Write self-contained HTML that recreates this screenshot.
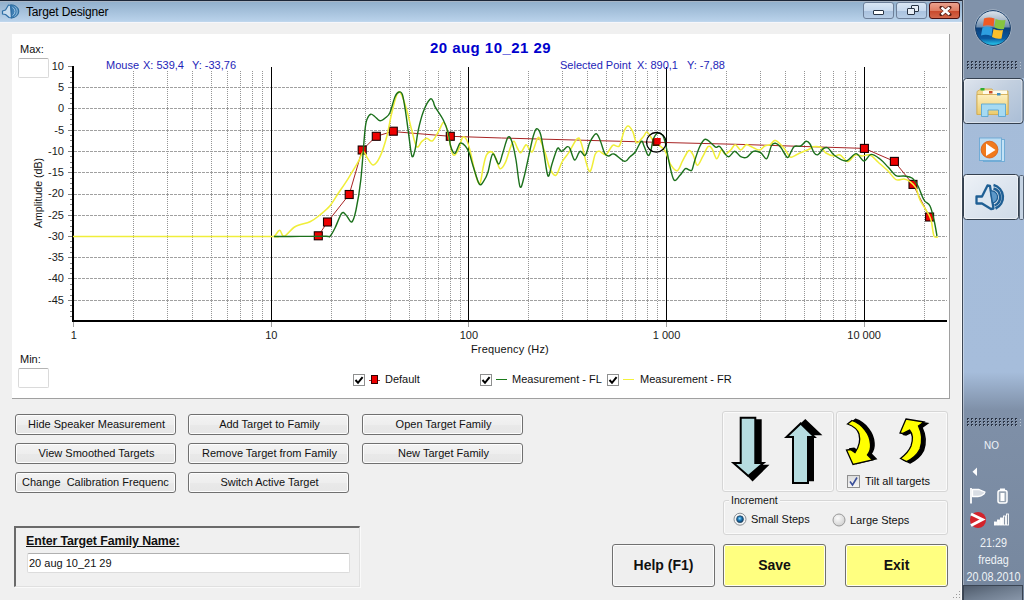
<!DOCTYPE html>
<html><head><meta charset="utf-8">
<style>
*{box-sizing:border-box;margin:0;padding:0}
html,body{width:1024px;height:600px;overflow:hidden;background:#f0f0f0;font-family:"Liberation Sans",sans-serif;position:relative}
.abs{position:absolute}
#titlebar{position:absolute;left:0;top:0;width:962px;height:23px;background:linear-gradient(#a9b6c6 0,#a9b6c6 1px,#92b0cd 1px,#b9d2ea 20px,#c4daee 21px,#f6f6fa 21px);border-top:1px solid #1c2638}
#title{position:absolute;left:26px;top:4px;font-size:12px;color:#000;letter-spacing:-0.15px}
#winright{position:absolute;left:961px;top:22px;width:1px;height:578px;background:#fbfbfb}
#windark{position:absolute;left:962px;top:0;width:1px;height:600px;background:#3e4856}
.tbtn{position:absolute;top:1px;height:17px;border:1px solid #6d7f99;border-radius:3px;background:linear-gradient(#d9e6f4 0,#c7d9ee 50%,#a9c1de 51%,#b7cde6 100%)}
.tbtn.close{border-color:#4a1010;background:linear-gradient(#eba18d 0,#de7d63 50%,#c8472b 51%,#d2664a 100%)}
#panel{position:absolute;left:12px;top:34px;width:938px;height:365px;background:#fff;border-right:1px solid #a0a0a0;border-bottom:1px solid #a0a0a0}
svg.full{position:absolute;left:0;top:0}
.yl{position:absolute;left:24px;width:40px;text-align:right;font-size:11px;color:#1a1a1a;line-height:14px}
.xl{position:absolute;top:328px;width:80px;text-align:center;font-size:11px;color:#1a1a1a;line-height:14px}
.t11{position:absolute;font-size:11px;line-height:14px;color:#111;white-space:nowrap}
.blue{color:#1e1eb8}
.smallbox{position:absolute;background:#fff;border:1px solid #dadada;border-top-color:#b4b4b4;border-radius:2px}
.chk{position:absolute;width:12px;height:12px;border:1px solid #8e8f8f;background:#fff}
.btn{position:absolute;height:21px;width:161px;border:1px solid #707070;border-radius:3px;background:linear-gradient(#f3f3f3,#eeeeee 50%,#e9e9e9 51%,#e6e6e6);box-shadow:inset 0 0 0 1px #fdfdfd;font-size:11px;line-height:18px;padding-left:2px;text-align:center;color:#111;white-space:nowrap;overflow:hidden}
.bbtn{position:absolute;top:544px;height:43px;width:103px;border:1px solid #707070;border-radius:3px;background:#efefef;box-shadow:inset 0 0 0 1px #fcfcfc;font-size:14px;font-weight:bold;line-height:41px;text-align:center;color:#111}
.bbtn.yel{background:#ffff80;box-shadow:inset 0 0 0 1px #fffff0}
.grp{position:absolute;border:1px solid #d6d6d6;border-radius:3px;box-shadow:inset 0 0 0 1px #fafafa}
#taskbar{position:absolute;left:963px;top:0;width:61px;height:600px;background:linear-gradient(#8092aa 0,#8092aa 78px,#a5bcd9 78px,#a6bddb 372px,#7f90a8 410px,#76879e 600px);border-left:1px solid rgba(255,255,255,0.35)}
.tray{position:absolute;color:#eef2f6;font-size:12px;text-align:center;width:61px;left:963px;line-height:14px;transform:scaleX(0.9)}
</style></head><body>

<div id="titlebar">
  <svg class="abs" style="left:0px;top:0px" width="22" height="22" viewBox="0 0 22 22">
    <path d="M10.5,3.8 A7.8,6.6 0 0 1 11.5,17 Z" fill="#3f7fb4" stroke="#2a6a9c" stroke-width="1"/>
    <path d="M12.5,6.5 A4.5,4.5 0 0 1 12.5,14.5" fill="none" stroke="#a8cce6" stroke-width="0.9"/>
    <path d="M14.5,5.5 A6,6 0 0 1 14.5,15.5" fill="none" stroke="#a8cce6" stroke-width="0.8"/>
    <path d="M2.5,10 L5.5,9 L8.5,4 L10.5,4.5 L11.5,17 L9,16.5 L5.5,13.5 L2.5,13 Z" fill="#c8dcee" stroke="#2f6fa6" stroke-width="1.2" stroke-linejoin="round"/>
  </svg>
  <div id="title">Target Designer</div>
  <div class="tbtn" style="left:863px;width:31px">
    <div class="abs" style="left:9px;top:7px;width:11px;height:5px;background:#fff;border:1px solid #2a3546;border-radius:1px"></div>
  </div>
  <div class="tbtn" style="left:896px;width:31px">
    <div class="abs" style="left:14px;top:2px;width:8px;height:7px;border:1px solid #2a3546;background:#e8eef6;border-radius:1px"></div>
    <div class="abs" style="left:10px;top:5px;width:8px;height:7px;border:1px solid #2a3546;background:#e8eef6;border-radius:1px"></div>
  </div>
  <div class="tbtn close" style="left:929px;width:31px">
    <svg class="abs" style="left:9px;top:3px" width="13" height="10" viewBox="0 0 13 10"><path d="M2.5 1.5 L10.5 8.5 M10.5 1.5 L2.5 8.5" stroke="#5a1e14" stroke-width="4" stroke-linecap="round"/><path d="M2.5 1.5 L10.5 8.5 M10.5 1.5 L2.5 8.5" stroke="#fff" stroke-width="2.4"/></svg>
  </div>
</div>
<div id="winright"></div><div id="windark"></div>
<svg class="abs" style="left:950px;top:588px" width="12" height="12"><g fill="#9a9a9a"><rect x="9" y="3" width="1" height="1"/><rect x="6" y="6" width="1" height="1"/><rect x="9" y="6" width="1" height="1"/><rect x="3" y="9" width="1" height="1"/><rect x="6" y="9" width="1" height="1"/><rect x="9" y="9" width="1" height="1"/></g></svg>

<div id="panel"></div>
<svg class="full" width="1024" height="600" shape-rendering="crispEdges"><line x1="74" y1="87.5" x2="947" y2="87.5" stroke="#a0a0a0" stroke-dasharray="3,1"/><line x1="74" y1="108.5" x2="947" y2="108.5" stroke="#a0a0a0" stroke-dasharray="3,1"/><line x1="74" y1="130.5" x2="947" y2="130.5" stroke="#a0a0a0" stroke-dasharray="3,1"/><line x1="74" y1="151.5" x2="947" y2="151.5" stroke="#a0a0a0" stroke-dasharray="3,1"/><line x1="74" y1="172.5" x2="947" y2="172.5" stroke="#a0a0a0" stroke-dasharray="3,1"/><line x1="74" y1="194.5" x2="947" y2="194.5" stroke="#a0a0a0" stroke-dasharray="3,1"/><line x1="74" y1="215.5" x2="947" y2="215.5" stroke="#a0a0a0" stroke-dasharray="3,1"/><line x1="74" y1="236.5" x2="947" y2="236.5" stroke="#a0a0a0" stroke-dasharray="3,1"/><line x1="74" y1="257.5" x2="947" y2="257.5" stroke="#a0a0a0" stroke-dasharray="3,1"/><line x1="74" y1="278.5" x2="947" y2="278.5" stroke="#a0a0a0" stroke-dasharray="3,1"/><line x1="74" y1="300.5" x2="947" y2="300.5" stroke="#a0a0a0" stroke-dasharray="3,1"/><line x1="133.5" y1="71" x2="133.5" y2="320" stroke="#959595" stroke-dasharray="1,1"/><line x1="167.5" y1="71" x2="167.5" y2="320" stroke="#959595" stroke-dasharray="1,1"/><line x1="192.5" y1="71" x2="192.5" y2="320" stroke="#959595" stroke-dasharray="1,1"/><line x1="211.5" y1="71" x2="211.5" y2="320" stroke="#959595" stroke-dasharray="1,1"/><line x1="227.5" y1="71" x2="227.5" y2="320" stroke="#959595" stroke-dasharray="1,1"/><line x1="240.5" y1="71" x2="240.5" y2="320" stroke="#959595" stroke-dasharray="1,1"/><line x1="252.5" y1="71" x2="252.5" y2="320" stroke="#959595" stroke-dasharray="1,1"/><line x1="262.5" y1="71" x2="262.5" y2="320" stroke="#959595" stroke-dasharray="1,1"/><line x1="331.5" y1="71" x2="331.5" y2="320" stroke="#959595" stroke-dasharray="1,1"/><line x1="365.5" y1="71" x2="365.5" y2="320" stroke="#959595" stroke-dasharray="1,1"/><line x1="390.5" y1="71" x2="390.5" y2="320" stroke="#959595" stroke-dasharray="1,1"/><line x1="409.5" y1="71" x2="409.5" y2="320" stroke="#959595" stroke-dasharray="1,1"/><line x1="425.5" y1="71" x2="425.5" y2="320" stroke="#959595" stroke-dasharray="1,1"/><line x1="438.5" y1="71" x2="438.5" y2="320" stroke="#959595" stroke-dasharray="1,1"/><line x1="450.5" y1="71" x2="450.5" y2="320" stroke="#959595" stroke-dasharray="1,1"/><line x1="460.5" y1="71" x2="460.5" y2="320" stroke="#959595" stroke-dasharray="1,1"/><line x1="528.5" y1="71" x2="528.5" y2="320" stroke="#959595" stroke-dasharray="1,1"/><line x1="562.5" y1="71" x2="562.5" y2="320" stroke="#959595" stroke-dasharray="1,1"/><line x1="587.5" y1="71" x2="587.5" y2="320" stroke="#959595" stroke-dasharray="1,1"/><line x1="606.5" y1="71" x2="606.5" y2="320" stroke="#959595" stroke-dasharray="1,1"/><line x1="622.5" y1="71" x2="622.5" y2="320" stroke="#959595" stroke-dasharray="1,1"/><line x1="635.5" y1="71" x2="635.5" y2="320" stroke="#959595" stroke-dasharray="1,1"/><line x1="647.5" y1="71" x2="647.5" y2="320" stroke="#959595" stroke-dasharray="1,1"/><line x1="657.5" y1="71" x2="657.5" y2="320" stroke="#959595" stroke-dasharray="1,1"/><line x1="726.5" y1="71" x2="726.5" y2="320" stroke="#959595" stroke-dasharray="1,1"/><line x1="760.5" y1="71" x2="760.5" y2="320" stroke="#959595" stroke-dasharray="1,1"/><line x1="785.5" y1="71" x2="785.5" y2="320" stroke="#959595" stroke-dasharray="1,1"/><line x1="804.5" y1="71" x2="804.5" y2="320" stroke="#959595" stroke-dasharray="1,1"/><line x1="820.5" y1="71" x2="820.5" y2="320" stroke="#959595" stroke-dasharray="1,1"/><line x1="833.5" y1="71" x2="833.5" y2="320" stroke="#959595" stroke-dasharray="1,1"/><line x1="845.5" y1="71" x2="845.5" y2="320" stroke="#959595" stroke-dasharray="1,1"/><line x1="855.5" y1="71" x2="855.5" y2="320" stroke="#959595" stroke-dasharray="1,1"/><line x1="924.5" y1="71" x2="924.5" y2="320" stroke="#959595" stroke-dasharray="1,1"/><line x1="271.5" y1="67" x2="271.5" y2="320" stroke="#000" stroke-width="1"/><line x1="271.5" y1="322" x2="271.5" y2="327" stroke="#a0a0a0"/><line x1="468.5" y1="67" x2="468.5" y2="320" stroke="#000" stroke-width="1"/><line x1="468.5" y1="322" x2="468.5" y2="327" stroke="#a0a0a0"/><line x1="666.5" y1="67" x2="666.5" y2="320" stroke="#000" stroke-width="1"/><line x1="666.5" y1="322" x2="666.5" y2="327" stroke="#a0a0a0"/><line x1="864.5" y1="67" x2="864.5" y2="320" stroke="#000" stroke-width="1"/><line x1="864.5" y1="322" x2="864.5" y2="327" stroke="#a0a0a0"/><line x1="73.5" y1="322" x2="73.5" y2="327" stroke="#a0a0a0"/><line x1="68" y1="66.5" x2="72" y2="66.5" stroke="#808080"/><line x1="70" y1="71.5" x2="72" y2="71.5" stroke="#808080"/><line x1="70" y1="77.5" x2="72" y2="77.5" stroke="#808080"/><line x1="70" y1="82.5" x2="72" y2="82.5" stroke="#808080"/><line x1="68" y1="87.5" x2="72" y2="87.5" stroke="#808080"/><line x1="70" y1="93.5" x2="72" y2="93.5" stroke="#808080"/><line x1="70" y1="98.5" x2="72" y2="98.5" stroke="#808080"/><line x1="70" y1="103.5" x2="72" y2="103.5" stroke="#808080"/><line x1="68" y1="108.5" x2="72" y2="108.5" stroke="#808080"/><line x1="70" y1="114.5" x2="72" y2="114.5" stroke="#808080"/><line x1="70" y1="119.5" x2="72" y2="119.5" stroke="#808080"/><line x1="70" y1="124.5" x2="72" y2="124.5" stroke="#808080"/><line x1="68" y1="130.5" x2="72" y2="130.5" stroke="#808080"/><line x1="70" y1="135.5" x2="72" y2="135.5" stroke="#808080"/><line x1="70" y1="140.5" x2="72" y2="140.5" stroke="#808080"/><line x1="70" y1="146.5" x2="72" y2="146.5" stroke="#808080"/><line x1="68" y1="151.5" x2="72" y2="151.5" stroke="#808080"/><line x1="70" y1="156.5" x2="72" y2="156.5" stroke="#808080"/><line x1="70" y1="162.5" x2="72" y2="162.5" stroke="#808080"/><line x1="70" y1="167.5" x2="72" y2="167.5" stroke="#808080"/><line x1="68" y1="172.5" x2="72" y2="172.5" stroke="#808080"/><line x1="70" y1="178.5" x2="72" y2="178.5" stroke="#808080"/><line x1="70" y1="183.5" x2="72" y2="183.5" stroke="#808080"/><line x1="70" y1="188.5" x2="72" y2="188.5" stroke="#808080"/><line x1="68" y1="194.5" x2="72" y2="194.5" stroke="#808080"/><line x1="70" y1="199.5" x2="72" y2="199.5" stroke="#808080"/><line x1="70" y1="204.5" x2="72" y2="204.5" stroke="#808080"/><line x1="70" y1="210.5" x2="72" y2="210.5" stroke="#808080"/><line x1="68" y1="215.5" x2="72" y2="215.5" stroke="#808080"/><line x1="70" y1="220.5" x2="72" y2="220.5" stroke="#808080"/><line x1="70" y1="226.5" x2="72" y2="226.5" stroke="#808080"/><line x1="70" y1="231.5" x2="72" y2="231.5" stroke="#808080"/><line x1="68" y1="236.5" x2="72" y2="236.5" stroke="#808080"/><line x1="70" y1="241.5" x2="72" y2="241.5" stroke="#808080"/><line x1="70" y1="247.5" x2="72" y2="247.5" stroke="#808080"/><line x1="70" y1="252.5" x2="72" y2="252.5" stroke="#808080"/><line x1="68" y1="257.5" x2="72" y2="257.5" stroke="#808080"/><line x1="70" y1="263.5" x2="72" y2="263.5" stroke="#808080"/><line x1="70" y1="268.5" x2="72" y2="268.5" stroke="#808080"/><line x1="70" y1="273.5" x2="72" y2="273.5" stroke="#808080"/><line x1="68" y1="278.5" x2="72" y2="278.5" stroke="#808080"/><line x1="70" y1="284.5" x2="72" y2="284.5" stroke="#808080"/><line x1="70" y1="289.5" x2="72" y2="289.5" stroke="#808080"/><line x1="70" y1="295.5" x2="72" y2="295.5" stroke="#808080"/><line x1="68" y1="300.5" x2="72" y2="300.5" stroke="#808080"/><line x1="70" y1="305.5" x2="72" y2="305.5" stroke="#808080"/><line x1="70" y1="311.5" x2="72" y2="311.5" stroke="#808080"/><line x1="70" y1="316.5" x2="72" y2="316.5" stroke="#808080"/><rect x="72" y="66" width="2.2" height="256" fill="#000"/><rect x="72" y="319.8" width="875" height="2.4" fill="#000"/></svg>
<svg class="full" width="1024" height="600"><polyline points="318.3,235.8 327.5,222.0 349.2,194.5 362.2,150.0 376.3,136.3 393.3,131.2 398.3,132.0 450.3,136.3 501.7,138.0 560.0,139.6 657.0,142.3 740.0,144.4 820.0,147.0 864.4,148.4 894.4,161.4 913.0,184.4 929.6,217.0" fill="none" stroke="#a82424" stroke-width="1"/><rect x="314.3" y="231.8" width="8" height="8" fill="#ee0000" stroke="#1a0000" stroke-width="1.1"/><rect x="323.5" y="218.0" width="8" height="8" fill="#ee0000" stroke="#1a0000" stroke-width="1.1"/><rect x="345.2" y="190.5" width="8" height="8" fill="#ee0000" stroke="#1a0000" stroke-width="1.1"/><rect x="358.2" y="146.0" width="8" height="8" fill="#ee0000" stroke="#1a0000" stroke-width="1.1"/><rect x="372.3" y="132.3" width="8" height="8" fill="#ee0000" stroke="#1a0000" stroke-width="1.1"/><rect x="389.3" y="127.2" width="8" height="8" fill="#ee0000" stroke="#1a0000" stroke-width="1.1"/><rect x="446.3" y="132.3" width="8" height="8" fill="#ee0000" stroke="#1a0000" stroke-width="1.1"/><rect x="860.4" y="144.4" width="8" height="8" fill="#ee0000" stroke="#1a0000" stroke-width="1.1"/><rect x="890.4" y="157.4" width="8" height="8" fill="#ee0000" stroke="#1a0000" stroke-width="1.1"/><rect x="909.0" y="180.4" width="8" height="8" fill="#ee0000" stroke="#1a0000" stroke-width="1.1"/><rect x="925.6" y="213.0" width="8" height="8" fill="#ee0000" stroke="#1a0000" stroke-width="1.1"/><path d="M73.0,236.5 C85.8,236.5 117.5,236.4 150.0,236.4 C182.5,236.4 247.3,236.4 268.0,236.4 C288.7,236.4 272.2,237.3 274.2,236.3 C276.1,235.3 278.0,230.3 279.7,230.3 C281.4,230.3 281.6,236.9 284.2,236.3 C286.8,235.7 290.7,229.1 295.0,226.7 C299.3,224.3 305.8,223.6 310.0,221.7 C314.2,219.8 316.7,217.7 320.0,215.0 C323.3,212.3 326.9,209.4 330.0,205.8 C333.1,202.2 335.2,197.9 338.3,193.3 C341.4,188.7 345.0,183.6 348.3,178.3 C351.6,173.0 355.8,166.1 358.3,161.7 C360.8,157.3 361.8,152.3 363.3,151.7 C364.8,151.1 365.8,156.1 367.5,158.3 C369.2,160.5 371.2,165.3 373.3,165.0 C375.4,164.7 377.8,161.4 380.0,156.7 C382.2,152.0 384.8,143.9 386.7,136.7 C388.6,129.5 390.0,120.2 391.7,113.3 C393.4,106.3 395.2,98.3 396.7,95.0 C398.2,91.7 399.1,90.8 400.8,93.3 C402.5,95.8 404.9,103.9 406.7,110.0 C408.5,116.1 410.0,123.9 411.7,130.0 C413.4,136.1 415.0,144.8 416.7,146.7 C418.4,148.6 420.0,143.1 421.7,141.7 C423.4,140.3 424.9,138.5 426.7,138.3 C428.5,138.2 430.4,142.2 432.5,140.8 C434.6,139.4 437.4,133.1 439.2,130.0 C441.0,127.0 442.1,122.8 443.3,122.5 C444.6,122.2 445.6,124.8 446.7,128.3 C447.8,131.8 448.9,138.9 450.0,143.3 C451.1,147.8 451.9,153.9 453.3,155.0 C454.7,156.1 456.8,152.9 458.3,150.0 C459.8,147.1 461.1,139.2 462.5,137.5 C463.9,135.8 465.3,137.4 466.7,140.0 C468.1,142.6 469.1,147.3 470.7,153.3 C472.2,159.3 474.4,171.0 476.0,176.0 C477.6,181.0 478.8,184.9 480.0,183.3 C481.2,181.8 482.2,171.5 483.3,166.7 C484.4,161.9 485.2,157.1 486.7,154.7 C488.1,152.2 490.4,151.3 492.0,152.0 C493.6,152.7 494.7,155.9 496.0,158.7 C497.3,161.5 498.4,168.0 500.0,168.7 C501.6,169.4 503.5,166.4 505.3,162.7 C507.1,159.0 509.2,150.3 510.7,146.7 C512.1,143.1 512.9,141.1 514.0,141.3 C515.1,141.5 516.2,146.1 517.3,148.0 C518.4,149.9 519.2,153.2 520.7,152.7 C522.2,152.1 524.6,145.3 526.0,144.7 C527.4,144.1 528.2,148.2 529.3,149.3 C530.4,150.4 531.4,153.1 532.7,151.3 C534.0,149.5 536.1,140.7 537.3,138.7 C538.5,136.7 538.7,136.9 540.0,139.3 C541.3,141.7 543.6,148.4 545.3,153.3 C547.0,158.2 548.2,165.0 550.0,168.7 C551.8,172.4 554.0,176.4 556.0,175.3 C558.0,174.2 559.9,165.8 562.0,162.0 C564.1,158.2 566.2,156.6 568.7,152.7 C571.2,148.8 575.2,140.3 577.3,138.7 C579.4,137.1 579.3,137.9 581.3,143.3 C583.3,148.7 587.0,169.5 589.3,171.3 C591.6,173.1 593.6,157.3 595.3,154.0 C597.0,150.7 597.5,151.2 599.3,151.3 C601.1,151.4 603.8,155.7 606.0,154.7 C608.2,153.7 610.5,146.8 612.7,145.3 C614.9,143.9 617.4,148.3 619.3,146.0 C621.2,143.7 622.5,134.6 624.0,131.3 C625.5,128.0 626.5,126.0 628.0,126.0 C629.5,126.0 631.2,128.5 632.7,131.3 C634.2,134.1 634.9,141.8 636.7,142.7 C638.5,143.6 641.6,138.5 643.3,136.7 C645.0,134.9 645.5,132.0 646.7,132.0 C647.9,132.0 649.4,134.8 650.7,136.7 C652.0,138.6 653.2,141.8 654.7,143.3 C656.2,144.9 658.2,144.7 660.0,146.0 C661.8,147.3 663.5,148.2 665.3,151.3 C667.1,154.4 668.7,161.5 670.7,164.7 C672.7,167.9 675.3,171.4 677.3,170.7 C679.3,170.0 680.8,164.0 682.7,160.7 C684.6,157.4 686.9,151.6 688.7,150.7 C690.5,149.8 691.9,152.9 693.3,155.3 C694.7,157.7 695.7,165.1 697.3,165.3 C698.9,165.5 700.9,159.8 702.7,156.7 C704.5,153.6 706.5,148.0 708.0,146.7 C709.5,145.4 710.5,146.7 712.0,148.7 C713.5,150.7 715.2,158.5 716.7,158.7 C718.2,158.9 719.9,150.8 721.3,150.0 C722.7,149.2 723.7,154.0 725.3,154.0 C726.9,154.0 729.0,151.6 730.7,150.0 C732.4,148.4 733.6,144.7 735.3,144.7 C737.0,144.7 738.9,150.0 740.7,150.0 C742.5,150.0 744.5,145.4 746.0,144.7 C747.5,144.0 747.8,145.1 750.0,146.0 C752.2,146.9 756.8,150.0 759.3,150.0 C761.8,150.0 762.9,146.9 764.7,146.0 C766.5,145.1 768.2,145.6 770.0,144.7 C771.8,143.8 773.1,140.0 775.3,140.4 C777.5,140.8 781.1,144.8 783.3,147.3 C785.5,149.8 787.4,153.6 788.7,155.3 C790.0,157.0 789.8,157.5 791.3,157.3 C792.8,157.1 794.9,155.4 798.0,154.0 C801.1,152.6 807.5,149.9 810.0,148.7 C812.5,147.5 810.9,146.9 812.7,146.7 C814.5,146.5 818.5,146.2 820.7,147.3 C822.9,148.4 823.8,151.6 826.0,153.0 C828.2,154.4 831.7,155.7 834.0,156.0 C836.3,156.3 837.7,154.1 840.0,155.0 C842.3,155.9 845.5,161.6 848.0,161.6 C850.5,161.6 852.7,155.9 855.0,155.0 C857.3,154.1 859.5,156.0 862.0,156.0 C864.5,156.0 867.3,154.0 870.0,155.0 C872.7,156.0 875.0,159.3 878.0,162.0 C881.0,164.7 885.0,168.1 888.0,171.0 C891.0,173.9 893.3,178.3 896.0,179.6 C898.7,180.9 901.7,178.7 904.0,179.0 C906.3,179.3 908.0,180.1 910.0,181.6 C912.0,183.1 914.3,184.9 916.0,188.0 C917.7,191.1 917.8,195.5 920.0,200.0 C922.2,204.5 927.1,211.3 929.0,215.0 C930.9,218.7 930.7,218.5 931.5,222.0 C932.3,225.5 932.9,233.5 934.0,236.0 C935.1,238.5 937.3,236.8 938.0,237.0" fill="none" stroke="#f0ee3a" stroke-width="1.55" stroke-linejoin="round"/><path d="M274.0,236.5 C278.3,236.5 291.3,236.4 300.0,236.4 C308.7,236.4 321.0,236.3 326.0,236.3 C331.0,236.3 328.5,237.7 330.0,236.3 C331.5,234.9 333.1,231.8 335.0,228.0 C336.9,224.2 339.9,215.5 341.7,213.3 C343.5,211.1 344.3,213.6 346.0,215.0 C347.7,216.4 350.0,222.8 351.7,222.0 C353.4,221.2 354.5,217.0 356.0,210.0 C357.5,203.0 359.3,193.3 360.8,180.0 C362.3,166.7 363.9,140.3 365.0,130.0 C366.1,119.7 366.5,120.9 367.5,118.3 C368.5,115.7 369.6,114.5 370.8,114.2 C372.1,113.9 373.5,115.6 375.0,116.7 C376.5,117.8 378.2,120.7 380.0,120.8 C381.8,120.9 384.1,118.9 385.8,117.5 C387.5,116.1 388.5,116.0 390.0,112.5 C391.5,109.0 393.5,100.1 395.0,96.7 C396.5,93.3 397.9,92.3 399.2,92.0 C400.4,91.7 401.4,91.5 402.5,95.0 C403.6,98.5 404.7,106.1 405.8,113.3 C406.9,120.5 408.2,131.1 409.2,138.3 C410.2,145.5 411.0,154.4 412.0,156.3 C413.0,158.2 413.9,154.4 415.0,150.0 C416.1,145.6 416.9,136.4 418.3,130.0 C419.7,123.6 421.4,116.8 423.3,111.7 C425.2,106.6 428.3,100.9 430.0,99.2 C431.7,97.5 432.5,100.5 433.3,101.7 C434.1,103.0 433.3,103.7 435.0,106.7 C436.7,109.8 441.1,115.6 443.3,120.0 C445.5,124.4 447.1,128.9 448.3,133.3 C449.6,137.8 449.7,143.4 450.8,146.7 C451.9,150.0 453.5,153.9 455.0,153.3 C456.5,152.7 458.3,144.5 460.0,143.3 C461.7,142.1 463.8,144.3 465.3,146.0 C466.9,147.7 468.0,149.9 469.3,153.3 C470.6,156.8 471.6,161.6 473.3,166.7 C475.0,171.8 477.5,181.7 479.3,184.0 C481.1,186.3 482.6,182.7 484.0,180.7 C485.4,178.7 486.6,176.4 488.0,172.0 C489.4,167.6 490.9,155.3 492.7,154.0 C494.5,152.7 497.0,164.1 498.7,164.0 C500.4,163.9 501.1,157.8 502.7,153.3 C504.2,148.9 506.4,139.2 508.0,137.3 C509.6,135.4 510.7,138.2 512.0,142.0 C513.3,145.8 514.7,152.6 516.0,160.0 C517.3,167.4 518.7,183.8 520.0,186.7 C521.3,189.6 522.5,182.9 524.0,177.3 C525.5,171.7 527.8,160.2 529.3,153.3 C530.8,146.4 532.1,140.1 533.3,136.0 C534.5,131.9 535.5,128.9 536.7,128.7 C537.9,128.5 539.5,130.6 540.7,134.7 C541.9,138.8 542.8,146.4 544.0,153.3 C545.2,160.2 546.7,174.2 548.0,176.0 C549.3,177.8 550.5,168.6 552.0,164.0 C553.5,159.4 556.0,151.0 557.3,148.7 C558.6,146.4 559.2,149.6 560.0,150.0 C560.8,150.4 560.8,151.9 562.0,151.3 C563.2,150.8 566.0,147.1 567.3,146.7 C568.6,146.3 568.8,146.5 570.0,148.7 C571.2,150.9 573.0,159.6 574.7,160.0 C576.4,160.4 578.2,152.1 580.0,151.3 C581.8,150.5 583.6,156.9 585.3,155.3 C587.0,153.8 588.2,145.6 590.0,142.0 C591.8,138.4 594.3,134.0 596.0,133.7 C597.7,133.4 598.5,136.7 600.0,140.0 C601.5,143.3 603.2,150.6 604.7,153.3 C606.2,156.0 607.2,155.9 608.7,156.0 C610.2,156.1 611.3,153.1 614.0,154.0 C616.7,154.9 622.0,160.9 624.7,161.3 C627.4,161.8 628.2,158.2 630.0,156.7 C631.8,155.1 633.4,154.6 635.3,152.0 C637.2,149.4 639.8,142.3 641.3,141.3 C642.8,140.3 642.9,143.7 644.0,146.0 C645.1,148.3 646.9,154.4 648.0,155.3 C649.1,156.2 649.8,154.0 650.7,151.3 C651.6,148.6 652.2,142.3 653.3,139.3 C654.4,136.3 655.7,134.0 657.3,133.3 C658.9,132.6 661.2,133.2 662.7,135.3 C664.2,137.4 664.9,141.3 666.0,146.0 C667.1,150.7 668.0,157.6 669.3,163.3 C670.6,169.0 672.2,178.0 674.0,180.0 C675.8,182.0 678.1,177.2 680.0,175.3 C681.9,173.4 683.8,169.6 685.3,168.7 C686.8,167.8 688.2,169.8 689.3,170.0 C690.4,170.2 691.1,171.6 692.0,170.0 C692.9,168.4 693.4,164.7 694.7,160.7 C696.0,156.7 698.2,149.6 700.0,146.0 C701.8,142.4 703.3,139.6 705.3,139.3 C707.3,139.0 710.2,142.7 712.0,144.0 C713.8,145.3 714.7,146.9 716.0,147.3 C717.3,147.8 718.0,145.1 720.0,146.7 C722.0,148.3 725.5,155.9 728.0,156.7 C730.5,157.5 732.6,151.3 734.7,151.3 C736.8,151.3 738.7,155.7 740.7,156.7 C742.7,157.7 744.6,158.2 746.7,157.3 C748.8,156.4 751.0,152.1 753.3,151.3 C755.6,150.5 758.5,151.5 760.7,152.7 C762.9,153.9 764.9,159.8 766.7,158.7 C768.5,157.6 769.9,148.6 771.3,146.0 C772.7,143.4 773.7,143.1 775.3,143.3 C776.9,143.5 778.9,145.2 780.7,147.3 C782.5,149.4 784.7,154.4 786.0,156.0 C787.3,157.6 787.4,158.2 788.7,156.7 C790.0,155.1 792.0,148.5 794.0,146.7 C796.0,144.9 798.7,146.9 800.7,146.0 C802.7,145.1 804.5,141.6 806.0,141.3 C807.5,141.0 808.7,142.1 810.0,144.0 C811.3,145.9 812.7,150.9 814.0,152.7 C815.3,154.5 816.5,155.4 818.0,154.7 C819.5,154.0 821.6,149.8 823.3,148.7 C825.0,147.6 826.2,146.9 828.0,148.0 C829.8,149.1 831.0,152.8 834.0,155.0 C837.0,157.2 842.3,161.2 846.0,161.0 C849.7,160.8 853.0,153.6 856.0,153.6 C859.0,153.6 861.5,160.9 864.0,161.0 C866.5,161.1 868.3,154.7 871.0,154.4 C873.7,154.1 877.2,156.9 880.0,159.0 C882.8,161.1 885.3,164.2 888.0,167.0 C890.7,169.8 893.3,174.1 896.0,175.6 C898.7,177.1 901.3,175.6 904.0,176.0 C906.7,176.4 909.7,176.3 912.0,178.0 C914.3,179.7 916.0,182.3 918.0,186.0 C920.0,189.7 922.0,196.7 924.0,200.0 C926.0,203.3 928.3,202.7 930.0,206.0 C931.7,209.3 932.8,215.0 934.0,220.0 C935.2,225.0 936.5,233.3 937.0,236.0" fill="none" stroke="#1b701b" stroke-width="1.4" stroke-linejoin="round"/><rect x="652.5" y="138.5" width="7" height="7.5" fill="#3a1a00"/><rect x="654.3" y="138" width="6.4" height="6.4" fill="#ee0000"/><circle cx="656.3" cy="142.3" r="9.8" fill="none" stroke="#000" stroke-width="1.3"/></svg>

<div class="t11" style="left:20px;top:42px">Max:</div>
<div class="smallbox" style="left:18px;top:58px;width:31px;height:20px"></div>
<div class="t11" style="left:20px;top:352px">Min:</div>
<div class="smallbox" style="left:18px;top:368px;width:31px;height:20px"></div>
<div class="yl" style="top:58.6px">10</div><div class="yl" style="top:79.9px">5</div><div class="yl" style="top:101.2px">0</div><div class="yl" style="top:122.5px">-5</div><div class="yl" style="top:143.7px">-10</div><div class="yl" style="top:165.0px">-15</div><div class="yl" style="top:186.3px">-20</div><div class="yl" style="top:207.6px">-25</div><div class="yl" style="top:228.8px">-30</div><div class="yl" style="top:250.1px">-35</div><div class="yl" style="top:271.4px">-40</div><div class="yl" style="top:292.6px">-45</div>
<div class="xl" style="left:33.7px">1</div><div class="xl" style="left:231.3px">10</div><div class="xl" style="left:428.9px">100</div><div class="xl" style="left:626.5px">1 000</div><div class="xl" style="left:824.1px">10 000</div>
<div class="abs" style="left:430px;top:38.6px;font-size:15px;font-weight:bold;color:#0000cd;letter-spacing:0.45px;white-space:nowrap">20 aug 10_21 29</div>
<div class="t11 blue" style="left:106px;top:57.7px">Mouse</div>
<div class="t11 blue" style="left:143px;top:57.7px">X: 539,4</div>
<div class="t11 blue" style="left:192px;top:57.7px">Y: -33,76</div>
<div class="t11 blue" style="left:560px;top:57.7px">Selected Point</div>
<div class="t11 blue" style="left:637px;top:57.7px">X: 890,1</div>
<div class="t11 blue" style="left:687px;top:57.7px">Y: -7,88</div>
<div class="t11" style="left:471px;top:342px;letter-spacing:0.15px">Frequency (Hz)</div>
<div class="t11" style="left:2px;top:186px;width:72px;text-align:center;transform:rotate(-90deg);transform-origin:36px 7px;font-size:10.6px">Amplitude (dB)</div>

<!-- legend -->
<div class="chk" style="left:353px;top:374px"><svg width="10" height="10" class="abs" style="left:0;top:0"><path d="M1.5 5 L4 7.8 L8.6 2.2" fill="none" stroke="#000" stroke-width="2"/></svg></div>
<div class="abs" style="left:369px;top:380px;width:11px;height:1px;background:#b03030"></div>
<div class="abs" style="left:371px;top:375px;width:7px;height:9px;background:#ee0000;border:1px solid #300"></div>
<div class="t11" style="left:385px;top:372px">Default</div>
<div class="chk" style="left:480px;top:374px"><svg width="10" height="10" class="abs" style="left:0;top:0"><path d="M1.5 5 L4 7.8 L8.6 2.2" fill="none" stroke="#000" stroke-width="2"/></svg></div>
<div class="abs" style="left:496px;top:379px;width:11px;height:1px;background:#1a7a1a"></div>
<div class="t11" style="left:512px;top:372px">Measurement - FL</div>
<div class="chk" style="left:607px;top:374px"><svg width="10" height="10" class="abs" style="left:0;top:0"><path d="M1.5 5 L4 7.8 L8.6 2.2" fill="none" stroke="#000" stroke-width="2"/></svg></div>
<div class="abs" style="left:623px;top:379px;width:11px;height:1px;background:#f4f23a"></div>
<div class="t11" style="left:640px;top:372px">Measurement - FR</div>

<!-- buttons -->
<div class="btn" style="left:15px;top:414px">Hide Speaker Measurement</div>
<div class="btn" style="left:15px;top:443px">View Smoothed Targets</div>
<div class="btn" style="left:15px;top:472px;text-align:left;padding-left:6px">Change&nbsp; Calibration Frequenc</div>
<div class="btn" style="left:188px;top:414px">Add Target to Family</div>
<div class="btn" style="left:188px;top:443px">Remove Target from Family</div>
<div class="btn" style="left:188px;top:472px">Switch Active Target</div>
<div class="btn" style="left:362px;top:414px">Open Target Family</div>
<div class="btn" style="left:362px;top:443px">New Target Family</div>

<!-- family name group -->
<div class="abs" style="left:14px;top:526px;width:346px;height:61px;border-top:2px solid #6a6a6a;border-left:2px solid #6a6a6a;border-right:1px solid #e0e0e0;border-bottom:1px solid #e0e0e0;box-shadow:1px 1px 0 #fafafa"></div>
<div class="abs" style="left:26px;top:534px;font-size:12.4px;font-weight:bold;text-decoration:underline;color:#111;white-space:nowrap;letter-spacing:-0.1px">Enter Target Family Name:</div>
<div class="abs" style="left:27px;top:553px;width:323px;height:20px;background:#fff;border:1px solid #dcdcdc;border-top-color:#b0b0b0;border-radius:2px"></div>
<div class="t11" style="left:29px;top:556px">20 aug 10_21 29</div>

<!-- arrows panel -->
<div class="grp" style="left:722px;top:411px;width:112px;height:81px"></div>
<div class="grp" style="left:836px;top:411px;width:112px;height:81px"></div>
<svg class="full" width="1024" height="600">
  <!-- down arrow shadow -->
  <polygon points="745,419.3 761.7,419.3 761.7,464.7 769.5,464.7 752.5,481.5 737,464.7 745,464.7" fill="#000"/>
  <polygon points="740.7,417.7 755.3,417.7 755.3,463 763.5,463 748.3,476 733.5,463 740.7,463" fill="#b6dce0" stroke="#000" stroke-width="2" stroke-linejoin="miter"/>
  <!-- up arrow -->
  <polygon points="805.3,419 822.4,435.3 814,435.3 814,481.3 800,481.3 800,435.3 788,435.3" fill="#000"/>
  <polygon points="800.7,423.5 814.5,437 808,437 808,483 793,483 793,437 786.5,437" fill="#b6dce0" stroke="#000" stroke-width="2"/>
  <!-- curved arrow cw -->
  <g id="cw"><path d="M847.5,424 L852,420.5 C862,424 870,434 870.5,444 C871,449 869,453 867.5,455 L872.5,460 L853,464.5 L846.5,450 L850.5,449.5 L855,452.5 C859,447 860.5,440 859,434 C857.5,429 853,426 847.5,424 Z" fill="#000" stroke="#000" stroke-width="1.5" transform="translate(3.5,-1.2)"/>
  <path d="M847.5,424 L852,420.5 C862,424 870,434 870.5,444 C871,449 869,453 867.5,455 L872.5,460 L853,464.5 L846.5,450 L850.5,449.5 L855,452.5 C859,447 860.5,440 859,434 C857.5,429 853,426 847.5,424 Z" fill="#ffff00" stroke="#000" stroke-width="1.3"/></g>
  <!-- curved arrow ccw -->
  <path d="M906,419 L924,422 L918.5,426 C921,431 923,440 920,449 C917,455 912,459 906.5,461.5 L900.5,458.5 C905,455 909,451 911,446 C913,440 913,434 909.5,430 L902.5,433.5 L900,433 Z" fill="#000" stroke="#000" stroke-width="1.5" transform="translate(3.5,1.5)"/>
  <path d="M906,419 L924,422 L918.5,426 C921,431 923,440 920,449 C917,455 912,459 906.5,461.5 L900.5,458.5 C905,455 909,451 911,446 C913,440 913,434 909.5,430 L902.5,433.5 L900,433 Z" fill="#ffff00" stroke="#000" stroke-width="1.3"/>
</svg>
<div class="chk" style="left:847px;top:475px;width:13px;height:13px;border-color:#8f8f8f;background:linear-gradient(#dcdcdc,#f6f6f6)"><svg width="11" height="11" class="abs" style="left:0;top:0"><path d="M2 5.5 L4.5 9 L9 1.5" fill="none" stroke="#3a4f9a" stroke-width="1.6"/></svg></div>
<div class="t11" style="left:865px;top:474px">Tilt all targets</div>

<!-- increment group -->
<div class="grp" style="left:723px;top:500px;width:225px;height:35px"></div>
<div class="abs" style="left:729px;top:494px;padding:0 2px;background:#f0f0f0;font-size:10.5px;line-height:13px;color:#111">Increment</div>
<svg class="abs" style="left:732px;top:511px" width="16" height="16"><defs><radialGradient id="rb" cx="45%" cy="40%" r="60%"><stop offset="0" stop-color="#9fe0ff"/><stop offset="0.45" stop-color="#1f7fc0"/><stop offset="1" stop-color="#0a3a66"/></radialGradient><radialGradient id="rbg" cx="50%" cy="50%" r="50%"><stop offset="0" stop-color="#d0d8de"/><stop offset="1" stop-color="#fafafa"/></radialGradient></defs><circle cx="8" cy="8.2" r="6" fill="url(#rbg)" stroke="#8a8f94" stroke-width="1"/><circle cx="8" cy="8.2" r="3.4" fill="url(#rb)" stroke="#2a4a66" stroke-width="0.8"/></svg>
<div class="t11" style="left:751px;top:512px">Small Steps</div>
<svg class="abs" style="left:831px;top:512px" width="16" height="16"><defs><radialGradient id="rg2" cx="40%" cy="35%" r="65%"><stop offset="0" stop-color="#fbfbfb"/><stop offset="1" stop-color="#d2d2d2"/></radialGradient></defs><circle cx="8" cy="8" r="6" fill="url(#rg2)" stroke="#999" stroke-width="1"/></svg>
<div class="t11" style="left:850px;top:513px">Large Steps</div>

<!-- big buttons -->
<div class="bbtn" style="left:612px">Help (F1)</div>
<div class="bbtn yel" style="left:723px">Save</div>
<div class="bbtn yel" style="left:845px">Exit</div>

<!-- taskbar -->
<div id="taskbar"></div>
<svg class="full" width="1024" height="600">
  <!-- orb -->
  <defs>
    <radialGradient id="orb" cx="50%" cy="35%" r="60%"><stop offset="0" stop-color="#7fd0f4"/><stop offset="0.5" stop-color="#1a5fa0"/><stop offset="1" stop-color="#0d2f5c"/></radialGradient>
    <linearGradient id="fold" x1="0" y1="0" x2="0" y2="1"><stop offset="0" stop-color="#fbe7a0"/><stop offset="1" stop-color="#e9c260"/></linearGradient>
  </defs>
  <defs>
    <linearGradient id="orbg" x1="0" y1="0" x2="0" y2="1"><stop offset="0" stop-color="#dfe6ee"/><stop offset="0.2" stop-color="#b8c6d4"/><stop offset="0.47" stop-color="#6f8eae"/><stop offset="0.5" stop-color="#0b3f7a"/><stop offset="0.8" stop-color="#0a5aa2"/><stop offset="1" stop-color="#2ad2f4"/></linearGradient>
  </defs>
  <circle cx="993" cy="28" r="18.4" fill="#cfdbe6" opacity="0.7"/>
  <circle cx="993" cy="28" r="17.4" fill="url(#orbg)" stroke="#143a66" stroke-width="1"/>
  <path d="M984,18.5 Q989,16.5 994.5,18.5 L993.5,26.5 Q988,24.5 983,26 Z" fill="#f05a24"/>
  <path d="M995.5,19 Q1000,21 1005.5,20 L1004,29 Q999,30 994.5,27.5 Z" fill="#86c440"/>
  <path d="M982.5,27.5 Q987.5,26 992.5,28 L991.5,36 Q986,34 981,35.5 Z" fill="#2e9fe0"/>
  <path d="M993.5,29 Q998,31 1003,30 L1001.5,38.5 Q996.5,39.5 992,37 Z" fill="#fcc02a"/>
  <defs><pattern id="dots" x="967" y="61" width="4" height="3" patternUnits="userSpaceOnUse"><rect x="0" y="0" width="2" height="2" fill="#2a3446"/><rect x="1" y="1" width="1" height="1" fill="#a0acbc"/></pattern><pattern id="dots2" x="967" y="418" width="4" height="3" patternUnits="userSpaceOnUse"><rect x="0" y="0" width="2" height="2" fill="#2a3446"/><rect x="1" y="1" width="1" height="1" fill="#a0acbc"/></pattern></defs>
  <rect x="967" y="61" width="52" height="9" fill="url(#dots)"/><g fill="#b8c4d2"><rect x="1020" y="62" width="1" height="1"/><rect x="1020" y="65" width="1" height="1"/><rect x="1020" y="68" width="1" height="1"/></g>
  <rect x="967" y="418" width="52" height="9" fill="url(#dots2)"/><g fill="#b8c4d2"><rect x="1020" y="419" width="1" height="1"/><rect x="1020" y="422" width="1" height="1"/><rect x="1020" y="425" width="1" height="1"/></g>
  <!-- folder button -->
  <defs>
    <linearGradient id="tbb" x1="0" y1="0" x2="1" y2="1"><stop offset="0" stop-color="#dfe5ee"/><stop offset="0.45" stop-color="#c2cfdf"/><stop offset="1" stop-color="#a9bdd6"/></linearGradient>
    <linearGradient id="tbb2" x1="0" y1="0" x2="1" y2="1"><stop offset="0" stop-color="#eef2f7"/><stop offset="0.5" stop-color="#dde5ef"/><stop offset="1" stop-color="#cfdae8"/></linearGradient>
    <linearGradient id="fold2" x1="0" y1="0" x2="0" y2="1"><stop offset="0" stop-color="#fdf0c0"/><stop offset="1" stop-color="#eccb6c"/></linearGradient>
  </defs>
  <rect x="963.5" y="78.5" width="59.5" height="45" rx="3" fill="url(#tbb)" stroke="#34404f"/>
  <rect x="964.5" y="79.5" width="57.5" height="43" rx="2.5" fill="none" stroke="#fff" stroke-opacity="0.45"/>
  <path d="M977,91.5 L981,89 L992,89 L993.5,91 L1008,91 L1008,114.5 L977,114.5 Z" fill="#f3d98c" stroke="#d2ad55" stroke-width="0.9"/>
  <rect x="983" y="90.5" width="24" height="4" fill="#fffbea"/>
  <path d="M977,94.5 L1008,94.5 L1008,114.5 L977,114.5 Z" fill="url(#fold2)" stroke="#d2ad55" stroke-width="0.9"/>
  <rect x="980.5" y="88" width="4" height="2.5" fill="#2fae2f"/><rect x="989" y="91" width="3.5" height="2.5" fill="#c8502a"/><rect x="997" y="93" width="3.5" height="2.5" fill="#3e8fc0"/>
  <path d="M981.5,104 L1005.5,104 L1005.5,116.5 L998.5,116.5 L998.5,110 L988,110 L988,116.5 L981.5,116.5 Z" fill="#a6daf2" stroke="#5aa6d2" stroke-width="0.9"/>
  <!-- media player -->
  <rect x="983.5" y="139.5" width="21" height="22" fill="#c4e2f6" stroke="#6aa8d4" stroke-width="0.9"/>
  <rect x="979.5" y="138" width="22" height="22.5" fill="#bcdcf2" stroke="#6aa8d4" stroke-width="0.9"/>
  <circle cx="989.5" cy="149.6" r="8.4" fill="#f07a1c" stroke="#d85a10" stroke-width="0.8"/>
  <path d="M986,143.5 L995.5,150 L986,156 Z" fill="#fff"/>
  <!-- speaker button -->
  <rect x="963.5" y="174.5" width="55" height="45" rx="3" fill="url(#tbb2)" stroke="#34404f"/>
  <rect x="964.5" y="175.5" width="53" height="43" rx="2.5" fill="none" stroke="#fff" stroke-opacity="0.5"/>
  <rect x="1019.5" y="175.5" width="4" height="44" rx="1" fill="#c6d4e4" stroke="#4a5666" stroke-width="0.9"/>
  <path d="M976.5,196.5 L982,196.5 L987.5,185.5 L990,186 L993.5,208.5 L991,209 L982,203.5 L976.5,203.5 Z" fill="#dde6f0" stroke="#1f5f94" stroke-width="2.3" stroke-linejoin="round"/>
  <path d="M990.5,191 A6,6 0 0 1 992.5,203 Z" fill="#5d98c8" stroke="#1f5f94" stroke-width="1.2"/>
  <path d="M993.5,188.5 A9,9 0 0 1 994.5,205.5" fill="none" stroke="#1f5f94" stroke-width="2.4"/>
  <path d="M993.5,185 A12.5,12.5 0 0 1 995.5,208.5" fill="none" stroke="#1f5f94" stroke-width="2.6"/>
  <!-- tray -->
  <path d="M977,467.5 L977,476 L972.5,471.75 Z" fill="#fff"/>
  <path d="M971,488 L971,503.5" stroke="#fff" stroke-width="1.8"/>
  <path d="M972.5,489.5 L979,489.5 Q982,491 985,492 L984,494 Q981,496.5 978,496.5 L972.5,496.5 Z" fill="#d8dde4" stroke="#fff" stroke-width="1.3" stroke-linejoin="round"/>
  <rect x="998" y="490.5" width="9" height="12.5" rx="2" fill="#9aa6b4" stroke="#fff" stroke-width="1.5"/>
  <rect x="1000.5" y="493" width="4" height="8" fill="#fff"/>
  <rect x="1000" y="488.5" width="5" height="2" fill="#fff"/>
  <circle cx="978" cy="520" r="8" fill="#d4232b"/>
  <path d="M971,514 L982.5,519.5 L971,525.5" fill="none" stroke="#fff" stroke-width="2.8"/>
  <g fill="#8a96a6" stroke="#fff" stroke-width="0.9">
    <rect x="994.5" y="522" width="2" height="3"/><rect x="997.5" y="520" width="2" height="5"/><rect x="1000.5" y="518" width="2" height="7"/><rect x="1003.5" y="516" width="2" height="9"/><rect x="1006.5" y="514" width="2" height="11"/>
  </g>
  <g fill="#fff"><rect x="994.5" y="522" width="2" height="3"/><rect x="997.5" y="520" width="2" height="5"/><rect x="1000.5" y="518" width="2" height="7"/></g>
  <defs><linearGradient id="sd" x1="0" y1="0" x2="1" y2="1"><stop offset="0" stop-color="#4e5a6a"/><stop offset="0.5" stop-color="#6e7c8e"/><stop offset="1" stop-color="#8a98ab"/></linearGradient></defs><rect x="963.5" y="585.5" width="59" height="15" fill="url(#sd)" stroke="#3a4452"/>
</svg>
<div class="tray" style="top:437.5px;left:961px;font-size:11px">NO</div>
<div class="tray" style="top:536px">21:29</div>
<div class="tray" style="top:553px">fredag</div>
<div class="tray" style="top:570px">20.08.2010</div>
</body></html>
